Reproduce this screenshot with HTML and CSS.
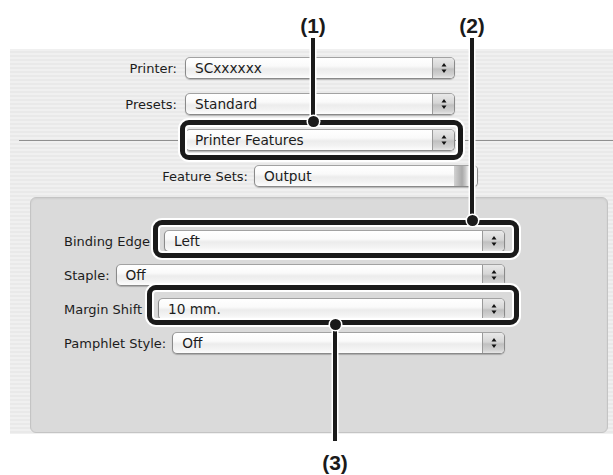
FILE: index.html
```html
<!DOCTYPE html>
<html>
<head>
<meta charset="utf-8">
<link rel="stylesheet" href="styles.css">
</head>
<body>
<div class="stage">
  <div class="window">
    <div class="row">
      <div class="row-label">Printer:</div>
      <div class="popup w270">
        <span class="val">SCxxxxxx</span>
        <span class="arrows"><svg width="8" height="14" viewBox="0 0 8 14"><polygon points="1.5,5.5 4,2 6.5,5.5"/><polygon points="1.5,8.5 4,12 6.5,8.5"/></svg></span>
      </div>
    </div>
    <div class="row">
      <div class="row-label">Presets:</div>
      <div class="popup w270">
        <span class="val">Standard</span>
        <span class="arrows"><svg width="8" height="14" viewBox="0 0 8 14"><polygon points="1.5,5.5 4,2 6.5,5.5"/><polygon points="1.5,8.5 4,12 6.5,8.5"/></svg></span>
      </div>
    </div>
    <div class="row">
      <div class="rule rule-left"></div>
      <div class="popup w270">
        <span class="val">Printer Features</span>
        <span class="arrows"><svg width="8" height="14" viewBox="0 0 8 14"><polygon points="1.5,5.5 4,2 6.5,5.5"/><polygon points="1.5,8.5 4,12 6.5,8.5"/></svg></span>
      </div>
      <div class="rule rule-right"></div>
    </div>
    <div class="row">
      <div class="row-label wide">Feature Sets:</div>
      <div class="popup w224">
        <span class="val">Output</span>
        <span class="grip"></span>
      </div>
    </div>

    <div class="panel">
      <div class="prow">
        <div class="plabel lab-binding">Binding Edge</div>
        <div class="popup grow">
          <span class="val">Left</span>
          <span class="arrows"><svg width="8" height="14" viewBox="0 0 8 14"><polygon points="1.5,5.5 4,2 6.5,5.5"/><polygon points="1.5,8.5 4,12 6.5,8.5"/></svg></span>
        </div>
      </div>
      <div class="prow">
        <div class="plabel">Staple:</div>
        <div class="popup grow">
          <span class="val">Off</span>
          <span class="arrows"><svg width="8" height="14" viewBox="0 0 8 14"><polygon points="1.5,5.5 4,2 6.5,5.5"/><polygon points="1.5,8.5 4,12 6.5,8.5"/></svg></span>
        </div>
      </div>
      <div class="prow">
        <div class="plabel lab-margin">Margin Shift</div>
        <div class="popup grow">
          <span class="val">10 mm.</span>
          <span class="arrows"><svg width="8" height="14" viewBox="0 0 8 14"><polygon points="1.5,5.5 4,2 6.5,5.5"/><polygon points="1.5,8.5 4,12 6.5,8.5"/></svg></span>
        </div>
      </div>
      <div class="prow">
        <div class="plabel">Pamphlet Style:</div>
        <div class="popup grow">
          <span class="val">Off</span>
          <span class="arrows"><svg width="8" height="14" viewBox="0 0 8 14"><polygon points="1.5,5.5 4,2 6.5,5.5"/><polygon points="1.5,8.5 4,12 6.5,8.5"/></svg></span>
        </div>
      </div>
    </div>
  </div>

  <div class="callouts">
    <div class="leader leader-1"></div>
    <div class="leader leader-2"></div>
    <div class="leader leader-3"></div>
    <div class="hbox hbox-1"></div>
    <div class="hbox hbox-2"></div>
    <div class="hbox hbox-3"></div>
    <div class="dot dot-1"></div>
    <div class="dot dot-2"></div>
    <div class="dot dot-3"></div>
    <div class="num num-1">(1)</div>
    <div class="num num-2">(2)</div>
    <div class="num num-3">(3)</div>
  </div>
</div>
</body>
</html>
```

FILE: styles.css
```css
* { box-sizing: border-box; }

html, body {
  margin: 0;
  padding: 0;
  background: #ffffff;
}

.stage {
  position: relative;
  width: 613px;
  height: 475px;
  overflow: hidden;
  padding-top: 49px;
  font-family: "DejaVu Sans", "Liberation Sans", sans-serif;
  font-size: 13px;
  color: #1c1c1c;
}

.window {
  margin-left: 10px;
  width: 603px;
  height: 385px;
  padding-top: 8px;
  background: repeating-linear-gradient(to bottom, #f0f0f0 0, #f0f0f0 2px, #e9e9e9 2px, #e9e9e9 4px);
  display: flex;
  flex-direction: column;
}

.row {
  display: flex;
  align-items: center;
  height: 22px;
  margin-bottom: 14px;
  flex: none;
}

.row-label {
  width: 175px;
  padding-right: 8px;
  text-align: right;
  white-space: nowrap;
}

.row-label.wide {
  width: 244px;
  padding-right: 6px;
}

.rule {
  height: 1px;
  background: #8f8f8f;
}
.rule-left {
  margin-left: 9px;
  width: 166px;
}
.rule-right {
  flex: 1;
}

.popup {
  display: flex;
  align-items: stretch;
  height: 22px;
  border: 1px solid #8a8a8a;
  border-top-color: #a2a2a2;
  border-radius: 5px;
  background: linear-gradient(to bottom, #ffffff 0%, #fafafa 40%, #ececec 55%, #f3f3f3 80%, #fdfdfd 100%);
  box-shadow: 0 1px 1px rgba(0, 0, 0, 0.22);
  overflow: hidden;
}
.popup.w270 { width: 270px; }
.popup.w224 { width: 224px; }
.popup.grow { flex: 1; }

.popup .val {
  flex: 1;
  padding-left: 9px;
  font-size: 13.7px;
  line-height: 20px;
  white-space: nowrap;
}

.popup .arrows {
  width: 22px;
  flex: none;
  display: flex;
  align-items: center;
  justify-content: center;
  border-left: 1px solid #9a9a9a;
  background: linear-gradient(to bottom, #e9e9e9 0%, #d6d6d6 45%, #c0c0c0 55%, #d2d2d2 85%, #e6e6e6 100%);
}
.popup .arrows svg { fill: #111; display: block; }

.popup .grip {
  width: 23px;
  flex: none;
  background: linear-gradient(to right, #d2d2d2 0%, #a9a9a9 35%, #c9c9c9 50%, #ededed 62%, #f6f6f6 100%);
}

.panel {
  margin-top: -4px;
  margin-left: 20px;
  width: 578px;
  height: 236px;
  padding: 32px 102px 0 33px;
  background: #dadada;
  border: 1px solid #c4c4c4;
  border-radius: 6px;
  box-shadow: inset 0 1px 2px rgba(0, 0, 0, 0.06);
  display: flex;
  flex-direction: column;
  gap: 12px;
  flex: none;
}

.prow {
  display: flex;
  align-items: center;
  height: 22px;
}

.plabel {
  white-space: nowrap;
  margin-right: 6px;
  flex: none;
}
.plabel.lab-binding {
  width: 91px;
  margin-right: 9px;
}
.plabel.lab-margin {
  width: 81px;
  margin-right: 13px;
}

/* annotation overlay */
.callouts {
  position: absolute;
  inset: 0;
  pointer-events: none;
}

.leader {
  position: absolute;
  width: 4px;
  background: #1a1a1a;
  box-shadow: 0 0 0 1.5px #ffffff;
}
.leader-1 { left: 311px; top: 38px; height: 83px; }
.leader-2 { left: 470px; top: 38px; height: 182px; }
.leader-3 { left: 333px; top: 325px; height: 116px; }

.hbox {
  position: absolute;
  border: 5px solid #1a1a1a;
  border-radius: 9px;
  box-shadow: 0 0 0 2px #ffffff, inset 0 0 0 2px #ffffff;
}
.hbox-1 { left: 180px; top: 120px; width: 283px; height: 40px; }
.hbox-2 { left: 153px; top: 220px; width: 366px; height: 38px; }
.hbox-3 { left: 147px; top: 285px; width: 372px; height: 40px; }

.dot {
  position: absolute;
  width: 11px;
  height: 11px;
  border-radius: 50%;
  background: #1a1a1a;
  box-shadow: 0 0 0 1.5px #ffffff;
}
.dot-1 { left: 307.5px; top: 116px; }
.dot-2 { left: 466.5px; top: 215px; }
.dot-3 { left: 329.5px; top: 319px; }

.num {
  position: absolute;
  width: 44px;
  text-align: center;
  font-family: "Liberation Sans", Arial, sans-serif;
  font-weight: bold;
  font-size: 21px;
  line-height: 24px;
  color: #1a1a1a;
}
.num-1 { left: 291px; top: 14px; }
.num-2 { left: 450px; top: 14px; }
.num-3 { left: 313px; top: 451px; }
```
